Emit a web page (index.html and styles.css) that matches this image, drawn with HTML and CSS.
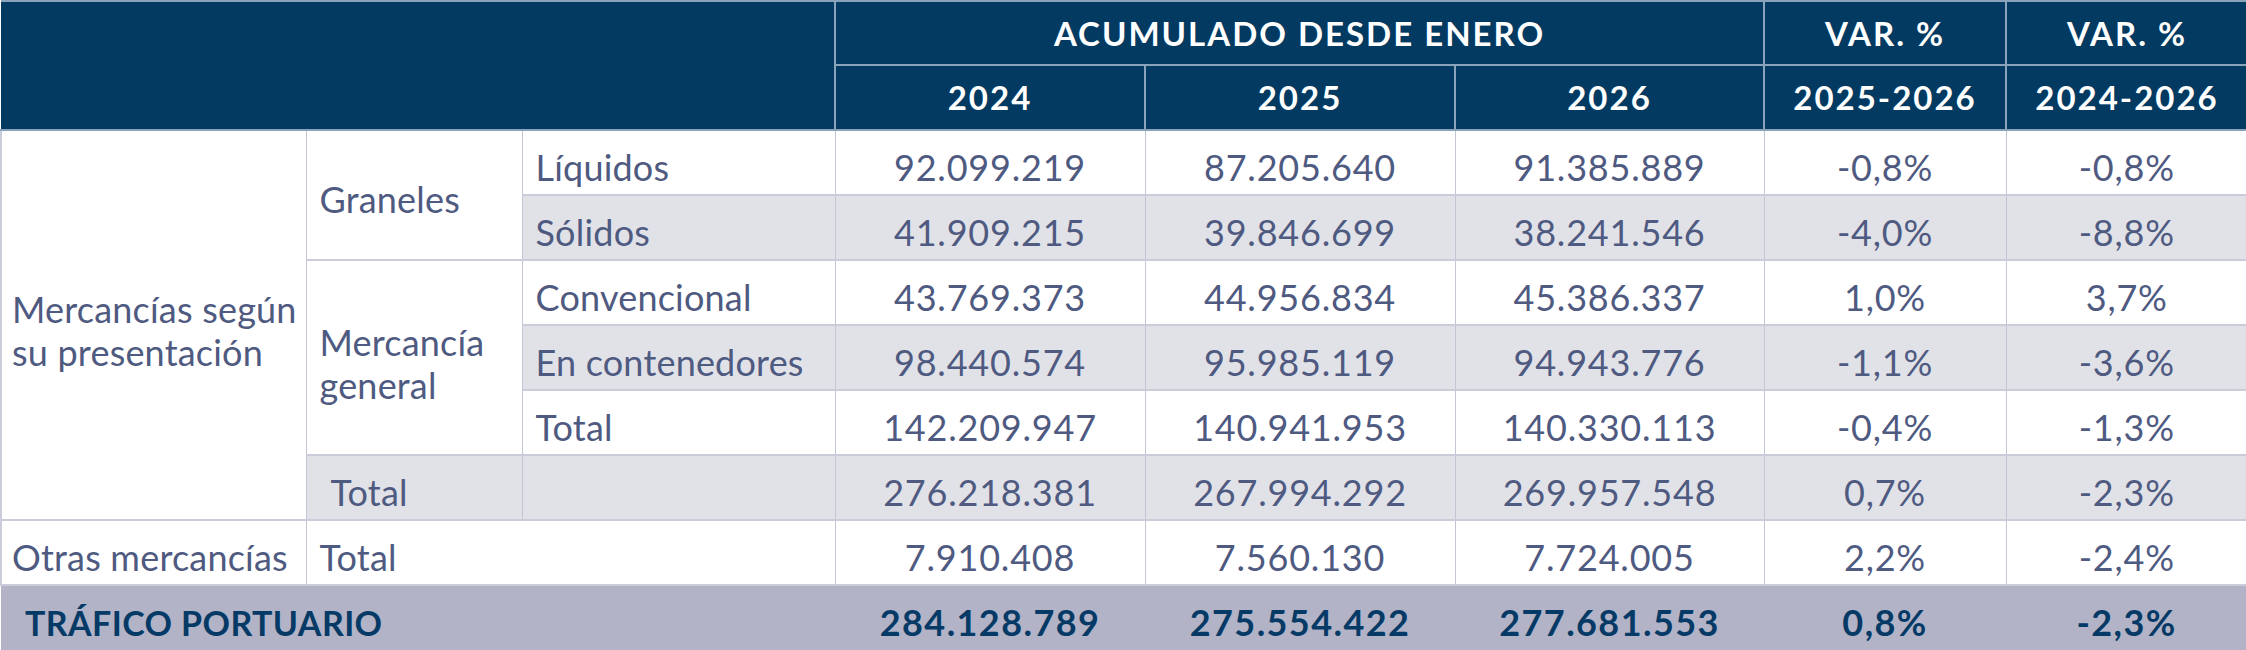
FILE: index.html
```html
<!DOCTYPE html>
<html lang="es">
<head>
<meta charset="utf-8">
<title>Tráfico portuario</title>
<link rel="stylesheet" href="styles.css">
</head>
<body>
<table class="traffic">
  <colgroup>
    <col class="c1"><col class="c2"><col class="c3">
    <col class="c4"><col class="c5"><col class="c6">
    <col class="c7"><col class="c8">
  </colgroup>
  <thead>
    <tr class="h1">
      <th colspan="3" rowspan="2" class="blank"></th>
      <th colspan="3">ACUMULADO DESDE ENERO</th>
      <th>VAR. %</th>
      <th>VAR. %</th>
    </tr>
    <tr class="h2">
      <th>2024</th>
      <th>2025</th>
      <th>2026</th>
      <th>2025-2026</th>
      <th>2024-2026</th>
    </tr>
  </thead>
  <tbody>
    <tr>
      <td rowspan="6" class="lbl l1 group">Mercancías según<br>su presentación</td>
      <td rowspan="2" class="lbl l2">Graneles</td>
      <td class="lbl l3">Líquidos</td>
      <td>92.099.219</td><td>87.205.640</td><td>91.385.889</td><td>-0,8%</td><td>-0,8%</td>
    </tr>
    <tr class="alt">
      <td class="lbl l3">Sólidos</td>
      <td>41.909.215</td><td>39.846.699</td><td>38.241.546</td><td>-4,0%</td><td>-8,8%</td>
    </tr>
    <tr>
      <td rowspan="3" class="lbl l2 group2">Mercancía<br>general</td>
      <td class="lbl l3">Convencional</td>
      <td>43.769.373</td><td>44.956.834</td><td>45.386.337</td><td>1,0%</td><td>3,7%</td>
    </tr>
    <tr class="alt">
      <td class="lbl l3">En contenedores</td>
      <td>98.440.574</td><td>95.985.119</td><td>94.943.776</td><td>-1,1%</td><td>-3,6%</td>
    </tr>
    <tr>
      <td class="lbl l3">Total</td>
      <td>142.209.947</td><td>140.941.953</td><td>140.330.113</td><td>-0,4%</td><td>-1,3%</td>
    </tr>
    <tr class="alt">
      <td class="lbl l2 indent">Total</td>
      <td class="lbl l3"></td>
      <td>276.218.381</td><td>267.994.292</td><td>269.957.548</td><td>0,7%</td><td>-2,3%</td>
    </tr>
    <tr>
      <td class="lbl l1">Otras mercancías</td>
      <td colspan="2" class="lbl l2">Total</td>
      <td>7.910.408</td><td>7.560.130</td><td>7.724.005</td><td>2,2%</td><td>-2,4%</td>
    </tr>
  </tbody>
  <tfoot>
    <tr>
      <td colspan="3" class="lbl foot-lbl">TRÁFICO PORTUARIO</td>
      <td>284.128.789</td><td>275.554.422</td><td>277.681.553</td><td>0,8%</td><td>-2,3%</td>
    </tr>
  </tfoot>
</table>
</body>
</html>
```

FILE: styles.css
```css
html, body {
  margin: 0;
  padding: 0;
  background: #ffffff;
}

.traffic {
  width: 2246px;
  border-collapse: collapse;
  table-layout: fixed;
  font-family: Lato, "Open Sans", "Liberation Sans", sans-serif;
}

.c1 { width: 305px; }
.c2 { width: 216px; }
.c3 { width: 313px; }
.c4 { width: 310px; }
.c5 { width: 310px; }
.c6 { width: 309px; }
.c7 { width: 242px; }
.c8 { width: 241px; }

/* header */
.traffic thead th {
  background: #023a62;
  color: #ffffff;
  font-weight: 700;
  font-size: 33px;
  letter-spacing: 2px;
  text-align: center;
  padding: 0;
  border: 2px solid #8aa3bb;
  line-height: 1;
}
.traffic thead tr.h1 th { height: 62px; }
.traffic thead tr.h2 th { height: 63px; }
.traffic thead th.blank { border-left: 0; }
.traffic thead tr th:last-child { border-right: 0; }

/* body */
.traffic tbody td {
  color: #4f5a81;
  font-size: 36px;
  font-weight: 400;
  letter-spacing: 0.8px;
  text-align: center;
  height: 65px;
  padding: 9px 0 0;
  box-sizing: border-box;
  line-height: 43px;
  border-top: 2px solid #cbccd9;
  border-bottom: 2px solid #cbccd9;
  border-left: 1px solid #c3c4d4;
  border-right: 1px solid #c3c4d4;
  background: #ffffff;
  white-space: nowrap;
}
.traffic tbody tr.alt td { background: #e1e2e8; }
.traffic tbody tr.alt td.group,
.traffic tbody tr.alt td.l2.group2 { background: #ffffff; }
.traffic tbody td:last-child { border-right: 0; }
.traffic tbody td.l1 { border-left: 2px solid #cbccd9; }

.traffic tbody td.lbl {
  text-align: left;
  padding-left: 13px;
  letter-spacing: 0.2px;
}
.traffic tbody td.l1 { padding-left: 10px; }
.traffic tbody td.indent { padding-left: 24px; }
.traffic tbody td.group,
.traffic tbody td.group2 {
  padding-top: 12px;
}

/* footer */
.traffic tfoot td {
  background: #b2b3c6;
  color: #063a66;
  font-size: 36px;
  font-weight: 700;
  letter-spacing: 1.4px;
  text-align: center;
  height: 66px;
  padding: 8px 0 0;
  box-sizing: border-box;
  border: 0;
  border-top: 2px solid #cbccd9;
  line-height: 43px;
}
.traffic tfoot td.foot-lbl {
  text-align: left;
  padding-left: 24px;
  font-size: 34px;
  letter-spacing: 0.4px;
}
```
